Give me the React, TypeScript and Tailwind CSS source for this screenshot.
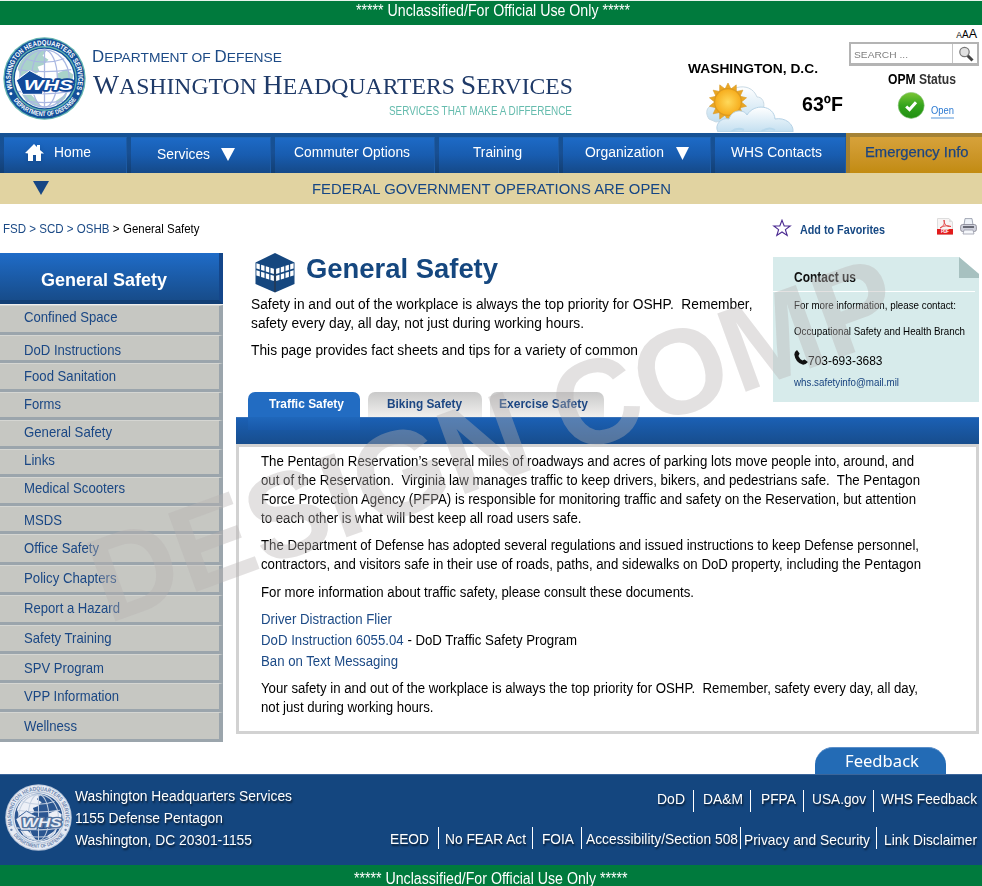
import React, { useLayoutEffect, useRef, useState } from "react";

type FitProps = { w: number; className?: string; children: React.ReactNode };

/* One line of text condensed or widened to an exact width. */
function Fit({ w, className = "", children }: FitProps) {
  const ref = useRef<HTMLSpanElement>(null);
  const [scale, setScale] = useState(1);
  useLayoutEffect(() => {
    if (ref.current && ref.current.offsetWidth) {
      setScale(w / ref.current.getBoundingClientRect().width);
    }
  }, []);
  return (
    <div className={"shrink-0 whitespace-pre " + className} style={{ width: w }}>
      <span ref={ref} className="inline-block origin-left" style={{ transform: `scaleX(${scale})` }}>
        {children}
      </span>
    </div>
  );
}

function Seal({ id, size, ring, ringText, sea, land, line, plate, plateText, plateEdge, teal }: {
  id: string; size: number; ring: string; ringText: string; sea: string; land: string;
  line: string; plate: string; plateText: string; plateEdge: string; teal: string;
}) {
  return (
    <svg width={size} height={size} viewBox="0 0 84 84" className="shrink-0">
      <defs>
        <path id={id + "t"} d="M10.3 54.4 A34 34 0 1 1 73.7 54.4" />
        <path id={id + "b"} d="M9.5 62.5 A38.8 38.8 0 0 0 74.5 62.5" />
      </defs>
      <circle cx="42" cy="42" r="41.7" fill={teal} />
      <circle cx="42" cy="42" r="40.4" fill={ring} />
      <circle cx="42" cy="42" r="32.8" fill={teal} />
      <circle cx="42" cy="42" r="31.4" fill={ring} />
      <circle cx="42" cy="42" r="30" fill={sea} />
      <path d="M15 32 C18 22 26 15 35 13 L44 14 40 19 46 23 41 28 35 30 37 35 30 39 24 36 18 40 Z" fill={land} />
      <path d="M55 37 L64 33 71 38 70 47 66 52 60 45 55 43 Z" fill={land} />
      <path d="M19 58 L28 58 35 65 39 71 30 69 23 64 Z M53 65 L62 59 66 54 63 62 55 69 Z" fill={land} />
      <g fill="none" stroke={line} strokeWidth="1.3">
        <ellipse cx="42" cy="42" rx="13" ry="29" />
        <ellipse cx="42" cy="42" rx="25" ry="29" />
        <path d="M42 13V71 M15 33Q42 37 69 33 M22 22Q42 29 62 22 M15 55Q42 60 69 55 M23 65Q42 68 61 65" />
      </g>
      <path d="M13.5 44 L27 34 42 42 40 58 20 58 Z" fill={plate} stroke={sea} strokeWidth="1" />
      <text x="21" y="54" textLength="50" lengthAdjust="spacingAndGlyphs" fontSize="15" fontWeight="900" fontStyle="italic" fontFamily="'Liberation Sans', sans-serif" fill={plateText} stroke={plateEdge} strokeWidth="3.4" strokeLinejoin="round" paintOrder="stroke">WHS</text>
      <g fill={ringText} fontFamily="'Liberation Sans', sans-serif" fontWeight="700" fontSize="7.2">
        <text textLength="128" lengthAdjust="spacingAndGlyphs"><textPath href={"#" + id + "t"} startOffset="2">WASHINGTON HEADQUARTERS SERVICES</textPath></text>
        <text fontSize="6.6" textLength="74" lengthAdjust="spacingAndGlyphs"><textPath href={"#" + id + "b"} startOffset="2">DEPARTMENT OF DEFENSE</textPath></text>
      </g>
      <circle cx="8" cy="57.5" r="1.5" fill={ringText} />
      <circle cx="76" cy="57.5" r="1.5" fill={ringText} />
    </svg>
  );
}

function Weather() {
  const rays = Array.from({ length: 14 }, (_, i) => (i * 360) / 14);
  return (
    <svg width="90" height="49" viewBox="0 0 90 49" className="shrink-0">
      <defs>
        <linearGradient id="cloud" x1="0" y1="0" x2="0" y2="1">
          <stop offset="0" stopColor="#ffffff" />
          <stop offset="1" stopColor="#c3dff0" />
        </linearGradient>
        <radialGradient id="sun">
          <stop offset="0" stopColor="#ffd95a" />
          <stop offset="1" stopColor="#f6ac1c" />
        </radialGradient>
      </defs>
      <path d="M3 36 C-3 27 4 20 12 22 C18 4 44 -4 51 14 C60 14 60 28 52 32 L10 39 Z" fill="url(#cloud)" stroke="#c9dae5" />
      {rays.map((a) => (
        <path key={a} d="M17.5 9 L22 0 L26.5 9 Z" fill="#eba722" stroke="#d79a2c" strokeWidth=".6" transform={`rotate(${a} 22 19)`} />
      ))}
      <circle cx="22" cy="19" r="13.4" fill="url(#sun)" stroke="#dc9a20" strokeWidth="1.2" />
      <path d="M12 49 C8 42 15 34 23 36 C26 26 38 26 41 32 C48 20 68 22 69 36 C79 34 88 41 87 49 Z" fill="url(#cloud)" stroke="#b5d2e6" />
      <path d="M25 49 Q31 44 38 47 M55 49 Q62 43 69 47" fill="none" stroke="#b7d8ec" strokeWidth="2" />
    </svg>
  );
}

const Down = ({ className, w, h }: { className: string; w: number; h: number }) => (
  <svg width={w} height={h} viewBox="0 0 14 13" preserveAspectRatio="none" className={"shrink-0 " + className}>
    <path d="M0 0H14L7 13Z" fill="currentColor" />
  </svg>
);

function NavItem({ className, children }: { className: string; children: React.ReactNode }) {
  return (
    <div className={"flex h-10 shrink-0 bg-gradient-to-b from-[#165294] via-[#184f93] to-[#123f74] pt-[4px] pl-[4px] " + className}>
      <div className="flex flex-1 items-start border-t border-r border-t-[#2168b5] border-r-[#1d5ba5] bg-gradient-to-b from-[#1d6ac6] via-[#185caf] to-[#154988]">
        {children}
      </div>
    </div>
  );
}

const side: [string, number, number, number][] = [
  ["Confined Space", 93.5, 30, 17], ["DoD Instructions", 97, 28, 20], ["Food Sanitation", 92, 29, 18],
  ["Forms", 37, 28, 17], ["General Safety", 88, 29, 17], ["Links", 31, 28, 16], ["Medical Scooters", 101, 29, 16],
  ["MSDS", 38, 28, 19], ["Office Safety", 75, 31, 19], ["Policy Chapters", 92.5, 30, 18],
  ["Report a Hazard", 96, 30, 18], ["Safety Training", 87.5, 29, 18], ["SPV Program", 80, 29, 19],
  ["VPP Information", 95, 29, 18], ["Wellness", 53, 30, 19],
];

const FootLink = ({ w, pl, pr, top = "", children, last = false }: { w: number; pl: string; pr: string; top?: string; children: React.ReactNode; last?: boolean }) => (
  <div className={"flex h-[22px] shrink-0 " + (last ? "" : "border-r border-white ") + pl + " " + pr + " " + top}>
    <Fit w={w} className="text-[14.5px] leading-[18px]">{children}</Fit>
  </div>
);

export default function App() {
  return (
    <div className="relative h-[886px] w-[982px] overflow-hidden bg-white font-['Liberation_Sans',Arial,sans-serif] text-black">
      {/* classification banner */}
      <div className="h-[25px] border-t border-[#e8f4ec] bg-[#007a3d] pl-[356px] text-white">
        <Fit w={274} className="text-[16px] leading-[20px]">***** Unclassified/For Official Use Only *****</Fit>
      </div>

      <header className="flex h-[108px]">
        <div className="pt-[12px] pl-[3px]">
          <Seal id="top" size={83} ring="#14519a" ringText="#ffffff" sea="#ffffff" land="#a9d2ca" line="#aab8e2" plate="#11499a" plateText="#ffffff" plateEdge="#11499a" teal="#64b5b0" />
        </div>
        <div className="w-[602px] pl-[6px]">
          <Fit w={190} className="mt-[19px] h-[24px] text-[16.5px] leading-[24px] text-[#1c4a86]">
            D<span className="text-[13.5px]">EPARTMENT OF </span>D<span className="text-[13.5px]">EFENSE</span>
          </Fit>
          <Fit w={480} className="mt-[2px] ml-px h-[30px] font-['Liberation_Serif',serif] text-[28px] leading-[30px] text-[#1f3a68]">
            W<span className="text-[24px]">ASHINGTON </span>H<span className="text-[24px]">EADQUARTERS </span>S<span className="text-[24px]">ERVICES</span>
          </Fit>
          <Fit w={183} className="mt-[4px] ml-[297px] text-[12px] leading-[14px] text-[#66bcae]">SERVICES THAT MAKE A DIFFERENCE</Fit>
        </div>
        <div className="w-[161px]">
          <Fit w={130} className="mt-[35px] text-[13.5px] leading-[18px] font-bold">WASHINGTON, D.C.</Fit>
          <div className="mt-[5px] flex pl-[18px]">
            <Weather />
            <Fit w={41} className="mt-[9px] ml-[6px] text-[20px] leading-[24px] font-bold">63ºF</Fit>
          </div>
        </div>
        <div className="w-[130px]">
          <div className="mt-px h-[14px] pr-[2px] text-right leading-[14px]">
            <span className="text-[8.5px]">A</span><span className="text-[10px]">A</span><span className="text-[12.5px]">A</span>
          </div>
          <div className="mt-[2px] flex h-[24px] border-2 border-b-[3px] border-[#b4b4b4] bg-white">
            <div className="w-[102px] border-r border-[#c4c4c4] pl-[3px]">
              <Fit w={54} className="text-[9.5px] leading-[21px] text-[#808080]">SEARCH ...</Fit>
            </div>
            <svg width="24" height="19" viewBox="0 0 24 19">
              <path d="M14.5 11.5L19.5 16.5" stroke="#444" strokeWidth="3" />
              <circle cx="11.5" cy="8" r="4.7" fill="#e1e1e1" stroke="#777" strokeWidth="1.2" />
            </svg>
          </div>
          <Fit w={68} className="mt-[4px] ml-[39px] text-[14px] leading-[18px] font-bold">OPM <span className="text-[#333]">Status</span></Fit>
          <div className="mt-[4px] flex pl-[48px]">
            <svg width="28" height="28" viewBox="0 0 28 28">
              <defs>
                <linearGradient id="ok" x1="0" y1="0" x2="0" y2="1"><stop offset="0" stopColor="#7cc636" /><stop offset=".5" stopColor="#35a41c" /><stop offset="1" stopColor="#209012" /></linearGradient>
              </defs>
              <circle cx="14.2" cy="13.4" r="13" fill="url(#ok)" stroke="#8ac47a" strokeWidth=".6" />
              <path d="M9.2 14.5L12.5 17.6L19 10.2" fill="none" stroke="#fff" strokeWidth="3" />
            </svg>
            <Fit w={23} className="mt-[11px] ml-[6px] h-[16px] border-b-2 border-[#a9caec] text-[11px] leading-[15px] text-[#2d7bd2]">Open</Fit>
          </div>
        </div>
      </header>

      <nav className="flex h-10 text-[14px] leading-[18px] text-white">
        <NavItem className="w-[127px]">
          <svg width="19" height="18" viewBox="0 0 19 18" className="mt-[5px] ml-[21px] shrink-0 drop-shadow">
            <path d="M0 10L9 1L12 4V2H15V7L19 10.5H16V18H11V12H8V18H3V10.5Z" fill="#fff" />
          </svg>
          <Fit w={37} className="mt-[5px] ml-[10px]">Home</Fit>
        </NavItem>
        <NavItem className="w-[144px]">
          <Fit w={53} className="mt-[7px] ml-[26px]">Services</Fit>
          <Down w={14} h={13} className="mt-[10px] ml-[11px]" />
        </NavItem>
        <NavItem className="w-[164px]"><Fit w={116} className="mt-[5px] ml-[19px]">Commuter Options</Fit></NavItem>
        <NavItem className="w-[124px]"><Fit w={49} className="mt-[5px] ml-[34px]">Training</Fit></NavItem>
        <NavItem className="w-[152px]">
          <Fit w={79} className="mt-[5px] ml-[22px]">Organization</Fit>
          <Down w={13} h={13} className="mt-[9px] ml-[12px]" />
        </NavItem>
        <NavItem className="w-[135px]"><Fit w={91} className="mt-[5px] ml-[16px]">WHS Contacts</Fit></NavItem>
        <div className="flex w-[136px] bg-gradient-to-b from-[#a48337] to-[#a57d26] pt-[4px] pl-[4px]">
          <div className="flex-1 bg-gradient-to-b from-[#d7a23a] to-[#c28b10]">
            <Fit w={103.5} className="mt-[6px] ml-[15px] text-[14.5px] text-[#1c4580] [-webkit-text-stroke:0.25px_#1c4580]">Emergency Info</Fit>
          </div>
        </div>
      </nav>

      <div className="flex h-[31px] bg-[#e1d3a1] text-[#164684]">
        <Down w={16} h={14} className="mt-[8px] ml-[33px]" />
        <Fit w={359} className="mt-[6px] ml-[263px] text-[15px] leading-[20px]">FEDERAL GOVERNMENT OPERATIONS ARE OPEN</Fit>
      </div>

      <div className="flex h-[49px] pt-[16px]">
        <Fit w={116.5} className="ml-[3px] text-[13px] leading-[18px] text-[#1b4a86]">{"FSD > SCD > OSHB "}<span className="text-black">&gt;</span></Fit>
        <Fit w={76.5} className="ml-[3px] text-[13px] leading-[18px]">General Safety</Fit>
        <svg width="20" height="18" viewBox="0 0 20 18" className="-mt-px ml-[573px]">
          <path d="M10 1.2L12.2 7H18.2L13.4 10.6L15.2 16.5L10 13L4.8 16.5L6.6 10.6L1.8 7H7.8Z" fill="#fff" stroke="#4b2a91" strokeWidth="1.1" />
        </svg>
        <Fit w={85} className="mt-px ml-[8px] text-[12px] leading-[18px] font-bold text-[#174984]">Add to Favorites</Fit>
        <svg width="16" height="17" viewBox="0 0 16 17" className="-mt-[2px] ml-[52px]">
          <path d="M.5 .5H12L15.5 4V16.5H.5Z" fill="#f8f4f4" stroke="#ddd" />
          <path d="M12 .5V4H15.5" fill="#ddd" />
          <path d="M3 10C7 8 8 5 7 2C7 6 9 9 14 8.5C10 7 6 8 3 10" fill="none" stroke="#e24848" />
          <rect y="11" width="16" height="5.5" fill="#e21b1b" />
          <text x="4" y="15.4" fontSize="4.5" fontWeight="700" fill="#fff" fontFamily="'Liberation Sans', sans-serif" textLength="8">PDF</text>
        </svg>
        <svg width="17" height="17" viewBox="0 0 17 17" className="-mt-[2px] ml-[7px]">
          <path d="M4 7L5 .6H12L13 7" fill="#eef2f8" stroke="#8d93a3" strokeWidth=".8" />
          <rect x=".6" y="6.5" width="15.8" height="7" rx="2" fill="#cfd1dc" stroke="#81828f" strokeWidth=".8" />
          <path d="M3 9H14" stroke="#4c4e5b" strokeWidth="1.6" />
          <path d="M4 12H13L14 16H3Z" fill="#f5f7fb" stroke="#9a9cab" strokeWidth=".8" />
        </svg>
      </div>

      <div className="flex h-[494px]">
        {/* section menu */}
        <aside className="w-[223px]">
          <div className="flex h-[51px] border-r-[4px] border-b-[4px] border-r-[#14468a] border-b-[#123f75] bg-gradient-to-b from-[#1f6cc8] to-[#174c8a]">
            <Fit w={126} className="mt-[15px] ml-[41px] text-[18.5px] leading-[24px] font-bold text-white">General Safety</Fit>
          </div>
          <div className="h-px bg-[#eee]" />
          {side.map(([label, w, h, base]) => (
            <div key={label} className="border-t border-r-[4px] border-b-[3px] border-t-[#d5d6d2] border-r-[#9ba5ac] border-b-[#9ba5ac] bg-[#c6c7c2] pl-[24px]" style={{ height: h, paddingTop: base - 15 }}>
              <Fit w={w} className="h-[9px] text-[14.5px] leading-[18px] text-[#1a4784]">{label}</Fit>
            </div>
          ))}
        </aside>

        <main className="ml-[13px] w-[743px]">
          <div className="flex h-[164px]">
            <div className="w-[537px] pl-[15px]">
              <div className="flex h-[42px]">
                <svg width="40" height="40" viewBox="0 0 40 40" className="ml-[4px]">
                  <path d="M20 0L39.5 9.5V31L20 39.5L.5 31V9.5Z" fill="#15477f" />
                  {[0, 1, 2, 3].map((c) => [0, 1].map((r) => (
                    <g key={c + "-" + r} fill="#fff">
                      <path d="M0 0L3.4 1V6.2L0 5.2Z" transform={`translate(${1.4 + c * 4.7} ${10.2 + c * 1.5 + r * 7})`} />
                      <path d="M0 0L-3.4 1V6.2L0 5.2Z" transform={`translate(${38.6 - c * 4.7} ${10.2 + c * 1.5 + r * 7})`} />
                    </g>
                  )))}
                  <path d="M20 17V39" stroke="#30323a" />
                </svg>
                <Fit w={192} className="ml-[11px] text-[27px] leading-[32px] font-bold text-[#15477f]">General Safety</Fit>
              </div>
              <div className="text-[14px] leading-[19px]">
                <Fit w={501.5}>{"Safety in and out of the workplace is always the top priority for OSHP.  Remember,"}</Fit>
                <Fit w={333}>safety every day, all day, not just during working hours.</Fit>
                <Fit w={387} className="mt-[8px]">This page provides fact sheets and tips for a variety of common</Fit>
              </div>
              <div className="mt-[32px] flex items-start">
                <div className="-ml-[3px] h-[25px] w-[112px] rounded-t-[7px] bg-[#226cc2] pl-[21px]">
                  <Fit w={75} className="mt-[4px] text-[12.5px] leading-[17px] font-bold text-white">Traffic Safety</Fit>
                </div>
                <div className="ml-[8px] h-[25px] w-[114px] rounded-t-[7px] bg-gradient-to-b from-[#c9c9c9] to-[#f1f0ee] pl-[19px]">
                  <Fit w={75} className="mt-[4px] text-[12.5px] leading-[17px] font-bold text-[#1d4783]">Biking Safety</Fit>
                </div>
                <div className="ml-[8px] h-[25px] w-[114px] rounded-t-[7px] bg-gradient-to-b from-[#c9c9c9] to-[#f1f0ee] pl-[9px]">
                  <Fit w={89} className="mt-[4px] text-[12.5px] leading-[17px] font-bold text-[#1d4783]">Exercise Safety</Fit>
                </div>
              </div>
            </div>

            <section className="mt-[4px] h-[145px] w-[206px] bg-[#d7ebeb]">
              <div className="flex h-[34px] justify-between pl-[21px]">
                <Fit w={62} className="mt-[11px] text-[14.5px] leading-[18px] font-bold text-[#111]">Contact us</Fit>
                <svg width="20" height="21" viewBox="0 0 20 21"><path d="M0 0L20 17V0Z" fill="#fff" /><path d="M0 0L20 17V21H0Z" fill="#a7c1c0" /></svg>
              </div>
              <div className="h-px w-[202px] bg-white" />
              <div className="pl-[21px]">
                <Fit w={162} className="mt-[6px] text-[11.5px] leading-[14px]">For more information, please contact:</Fit>
                <Fit w={171} className="mt-[12px] text-[11.5px] leading-[14px]">Occupational Safety and Health Branch</Fit>
                <div className="mt-[12px] flex h-[17px]">
                  <svg width="14" height="15" viewBox="0 0 14 15"><path d="M3 0L5.6 3.6L4.4 6Q5.6 9 8.4 10.4L10.6 9.4L14 12Q11.5 15 8.5 14.6Q1.5 12.5 .3 4.5Q.3 1.5 3 0Z" fill="#111" /></svg>
                  <Fit w={74.5} className="mt-[2px] text-[13px] leading-[17px]">703-693-3683</Fit>
                </div>
                <Fit w={105} className="mt-[8px] text-[11.5px] leading-[14px] text-[#17427f]">whs.safetyinfo@mail.mil</Fit>
              </div>
            </section>
          </div>

          <div className="h-[27px] border-t border-[#3a73b8] bg-gradient-to-b from-[#1b60b4] to-[#174d8d] pl-[12px]">
            <div className="-mt-px h-[13px] w-[112px] bg-gradient-to-b from-[#1f67bb] to-[#1959a9]" />
          </div>
          <section className="h-[290px] border-3 border-[#d2d2d2] pt-[5px] pl-[22px] text-[14px] leading-[19px]">
            <Fit w={653}>The Pentagon Reservation’s several miles of roadways and acres of parking lots move people into, around, and</Fit>
            <Fit w={659}>{"out of the Reservation.  Virginia law manages traffic to keep drivers, bikers, and pedestrians safe.  The Pentagon"}</Fit>
            <Fit w={655}>Force Protection Agency (PFPA) is responsible for monitoring traffic and safety on the Reservation, but attention</Fit>
            <Fit w={320.5}>to each other is what will best keep all road users safe.</Fit>
            <Fit w={658} className="mt-[8px]">The Department of Defense has adopted several regulations and issued instructions to keep Defense personnel,</Fit>
            <Fit w={660}>contractors, and visitors safe in their use of roads, paths, and sidewalks on DoD property, including the Pentagon</Fit>
            <Fit w={433} className="mt-[9px]">For more information about traffic safety, please consult these documents.</Fit>
            <div className="mt-[7px] mb-[7px] leading-[21px] text-[#1c4a86]">
              <Fit w={131}>Driver Distraction Flier</Fit>
              <Fit w={316}>DoD Instruction 6055.04<span className="text-black"> - DoD Traffic Safety Program</span></Fit>
              <Fit w={137}>Ban on Text Messaging</Fit>
            </div>
            <Fit w={657}>{"Your safety in and out of the workplace is always the top priority for OSHP.  Remember, safety every day, all day,"}</Fit>
            <Fit w={172.5}>not just during working hours.</Fit>
          </section>
        </main>
      </div>

      <div className="flex h-[27px] pl-[815px]">
        <div className="h-[27px] w-[131px] rounded-t-[18px] border-t border-[#5b8fc9] bg-[#236bb5] pl-[30px]">
          <Fit w={74} className="mt-px font-['Noto_Sans',sans-serif] text-[16.5px] leading-[24px] text-white">Feedback</Fit>
        </div>
      </div>

      <footer className="flex h-[91px] justify-between border-t border-[#3b659a] bg-[#14467f] text-white [text-shadow:1px_2px_2px_rgba(0,0,0,0.65)]">
        <div className="flex">
          <div className="pt-[9px] pl-[5px] [text-shadow:none]">
            <Seal id="bot" size={67} ring="#e6ebf4" ringText="#6d86ae" sea="#2a5590" land="#edf0f7" line="#c3cfe0" plate="#e6ebf5" plateText="#e9eef6" plateEdge="#54749f" teal="#b5c3d8" />
          </div>
          <div className="mt-[10px] ml-[3px] text-[14px] leading-[22px]">
            <Fit w={217}>Washington Headquarters Services</Fit>
            <Fit w={148}>1155 Defense Pentagon</Fit>
            <Fit w={177}>Washington, DC 20301-1155</Fit>
          </div>
        </div>
        <div className="flex flex-col items-end pr-[5px]">
          <div className="mt-[15px] flex">
            <FootLink w={28} pl="" pr="pr-[8px]">DoD</FootLink>
            <FootLink w={40} pl="pl-[9px]" pr="pr-[7px]">DA&amp;M</FootLink>
            <FootLink w={35} pl="pl-[10px]" pr="pr-[7px]">PFPA</FootLink>
            <FootLink w={54} pl="pl-[8px]" pr="pr-[7px]">USA.gov</FootLink>
            <FootLink w={96} pl="pl-[7px]" pr="" last>WHS Feedback</FootLink>
          </div>
          <div className="mt-[15px] flex">
            <FootLink w={39} pl="" pr="pr-[9px]" top="pt-[3px]">EEOD</FootLink>
            <FootLink w={81} pl="pl-[6px]" pr="pr-[6px]" top="pt-[3px]">No FEAR Act</FootLink>
            <FootLink w={32} pl="pl-[9px]" pr="pr-[7px]" top="pt-[3px]">FOIA</FootLink>
            <FootLink w={152} pl="pl-[4px]" pr="pr-[2px]" top="pt-[3px]">Accessibility/Section 508</FootLink>
            <FootLink w={126} pl="pl-[3px]" pr="pr-[6px]" top="pt-[4px]">Privacy and Security</FootLink>
            <FootLink w={93} pl="pl-[7px]" pr="" top="pt-[4px]" last>Link Disclaimer</FootLink>
          </div>
        </div>
      </footer>
      <div className="h-[21px] bg-[#007a3d] pt-[4px] pl-[354px] text-white">
        <Fit w={273.5} className="text-[16px] leading-[20px]">***** Unclassified/For Official Use Only *****</Fit>
      </div>

      {/* draft watermark over the whole page */}
      <svg width="982" height="886" viewBox="0 0 982 886" className="pointer-events-none absolute top-0 left-0">
        <text transform="translate(108 624) rotate(-20)" fontSize="121" fontWeight="700" fontFamily="'Liberation Sans', sans-serif" textLength="850" lengthAdjust="spacingAndGlyphs" fill="#b8b3b3" fillOpacity=".39">DESIGN COMP</text>
      </svg>
    </div>
  );
}
